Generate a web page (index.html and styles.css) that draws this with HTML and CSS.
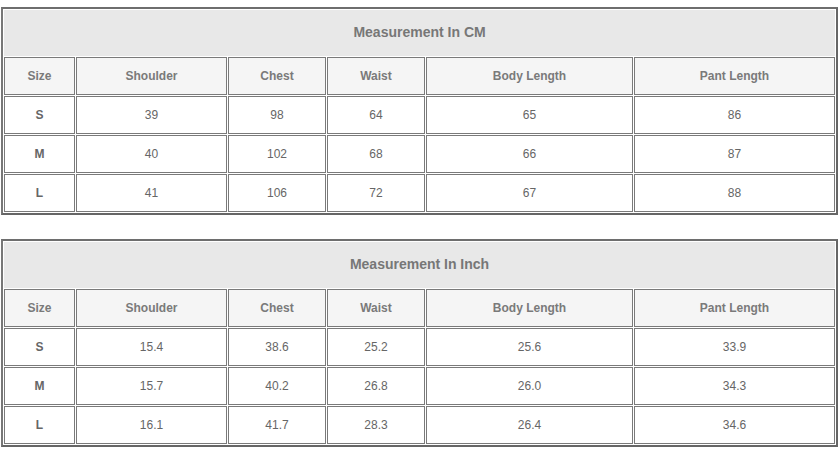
FILE: index.html
```html
<!DOCTYPE html>
<html>
<head>
<meta charset="utf-8">
<link rel="stylesheet" href="styles.css">
</head>
<body>
<table class="size-table first">
  <colgroup>
    <col class="c-size"><col class="c-shoulder"><col class="c-chest"><col class="c-waist"><col class="c-body"><col class="c-pant">
  </colgroup>
  <tr><td class="title" colspan="6">Measurement In CM</td></tr>
  <tr class="head"><th>Size</th><th>Shoulder</th><th>Chest</th><th>Waist</th><th>Body Length</th><th>Pant Length</th></tr>
  <tr><th class="sz">S</th><td>39</td><td>98</td><td>64</td><td>65</td><td>86</td></tr>
  <tr><th class="sz">M</th><td>40</td><td>102</td><td>68</td><td>66</td><td>87</td></tr>
  <tr><th class="sz">L</th><td>41</td><td>106</td><td>72</td><td>67</td><td>88</td></tr>
</table>
<table class="size-table second">
  <colgroup>
    <col class="c-size"><col class="c-shoulder"><col class="c-chest"><col class="c-waist"><col class="c-body"><col class="c-pant">
  </colgroup>
  <tr><td class="title" colspan="6">Measurement In Inch</td></tr>
  <tr class="head"><th>Size</th><th>Shoulder</th><th>Chest</th><th>Waist</th><th>Body Length</th><th>Pant Length</th></tr>
  <tr><th class="sz">S</th><td>15.4</td><td>38.6</td><td>25.2</td><td>25.6</td><td>33.9</td></tr>
  <tr><th class="sz">M</th><td>15.7</td><td>40.2</td><td>26.8</td><td>26.0</td><td>34.3</td></tr>
  <tr><th class="sz">L</th><td>16.1</td><td>41.7</td><td>28.3</td><td>26.4</td><td>34.6</td></tr>
</table>
</body>
</html>
```
FILE: styles.css
```css
html, body {
  margin: 0;
  padding: 0;
  background: #ffffff;
}
body {
  padding-top: 7px;
  padding-left: 1px;
  font-family: "Liberation Sans", Arial, sans-serif;
}
.size-table {
  width: 837px;
  table-layout: fixed;
  border-collapse: separate;
  border-spacing: 1px;
  border: 2px solid #666666;
  border-left-color: #777777;
  border-top-color: #6e6e6e;
}
.size-table.second {
  margin-top: 24px;
}
.c-size { width: 71px; }
.c-shoulder { width: 151px; }
.c-chest { width: 98px; }
.c-waist { width: 98px; }
.c-body { width: 207px; }
.c-pant { width: 201px; }
.size-table td,
.size-table th {
  border: 1px solid #7a7a7a;
  padding: 0;
  height: 36px;
  text-align: center;
  vertical-align: middle;
  font-size: 12px;
  color: #666666;
  font-weight: normal;
}
.size-table th {
  font-weight: bold;
  color: #7a7a7a;
}
.size-table th.sz {
  color: #666666;
}
.size-table td.title {
  height: 41px;
  padding-bottom: 3px;
  background: #e8e8e8;
  font-size: 14px;
  font-weight: bold;
  color: #777777;
  border-color: #e8e8e8;
}
.head th {
  background: #f5f5f5;
}
```
